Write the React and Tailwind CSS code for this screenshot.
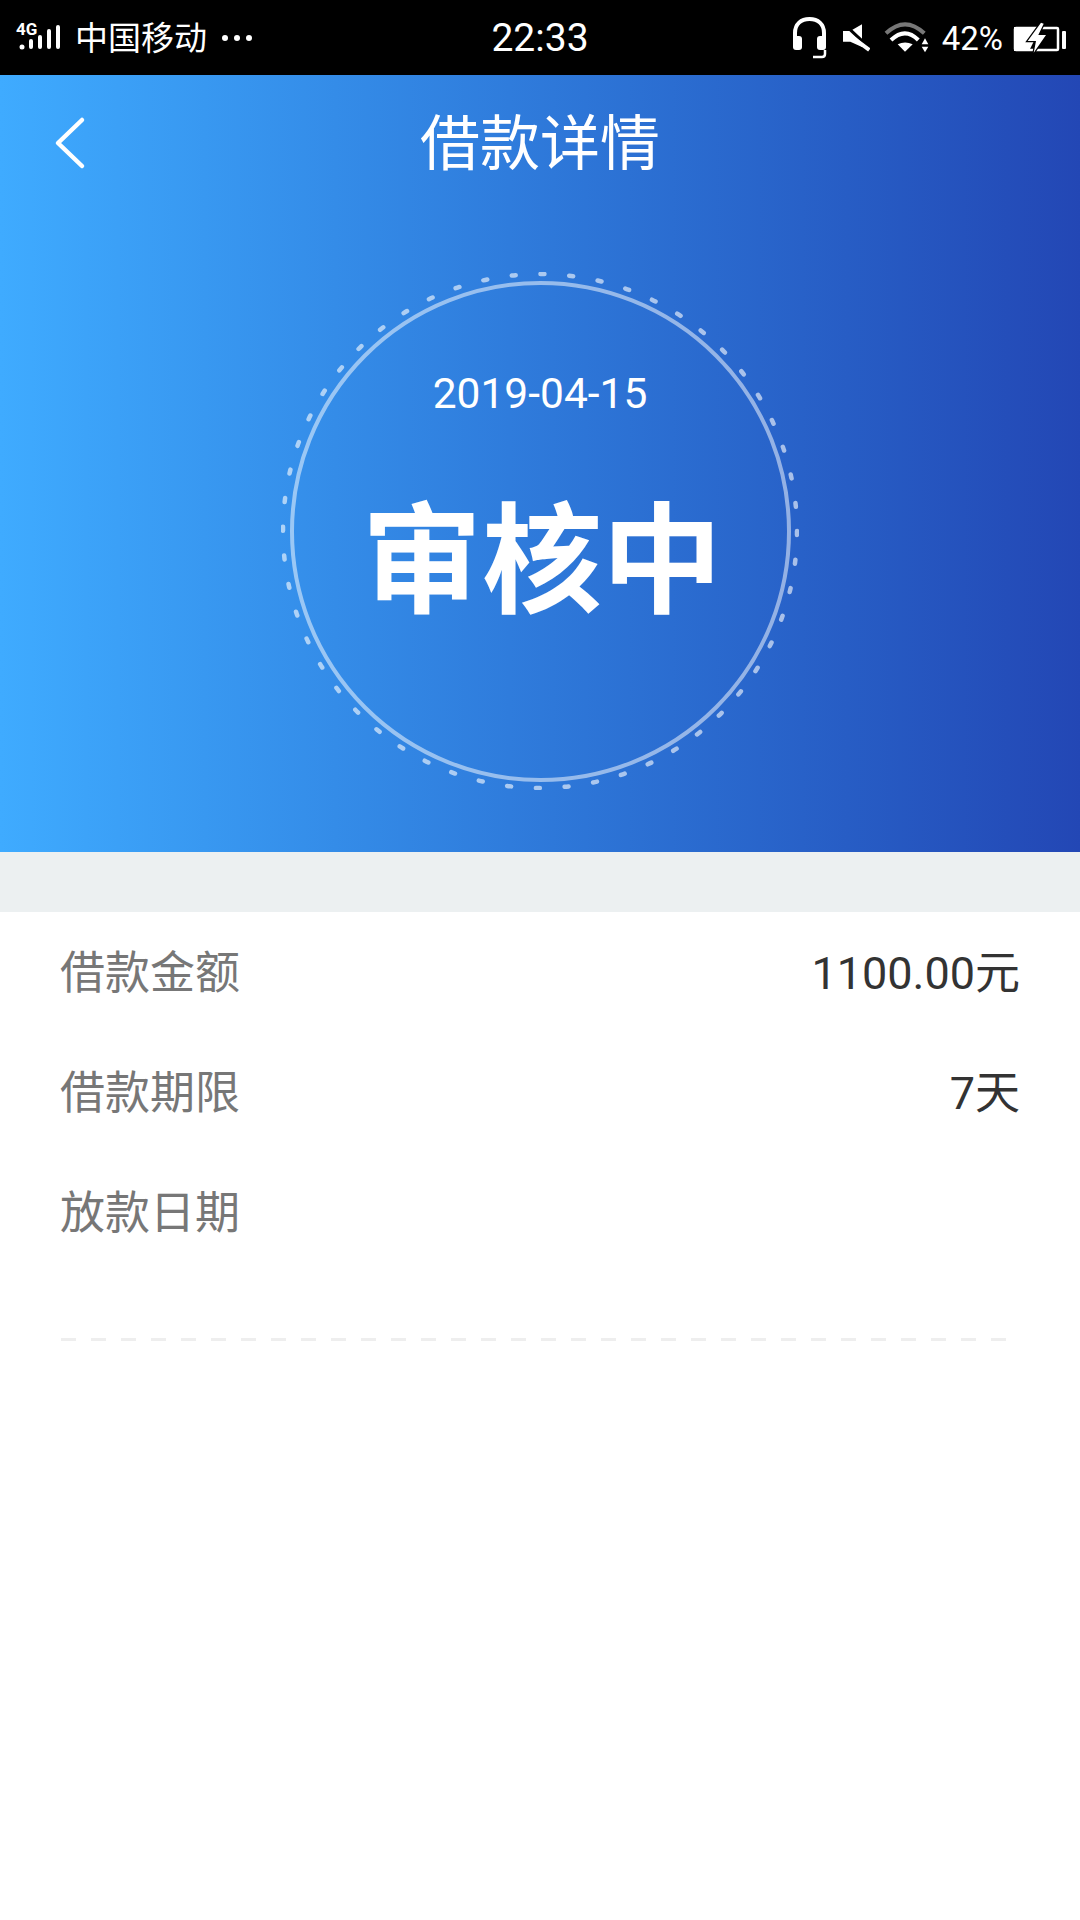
import React from "react";

const cjk = "font-['Roboto','Noto_Sans_CJK_SC',sans-serif]";

function Signal() {
  return (
    <div className="relative h-[48px] w-[46px]">
      <span className="absolute left-0 top-[5px] font-['Roboto',sans-serif] text-[17px] font-bold leading-[20px] text-white">4G</span>
      <svg className="absolute left-0 top-0" width="46" height="48" viewBox="0 0 46 48" fill="#fff">
        <circle cx="6" cy="33" r="2.500" />
        <rect x="13" y="25" width="4" height="10" rx="2" />
        <rect x="22" y="21" width="4" height="14" rx="2" />
        <rect x="31" y="15" width="4" height="20" rx="2" />
        <rect x="40" y="11" width="4" height="24" rx="2" />
      </svg>
    </div>
  );
}

function Headphones() {
  return (
    <svg width="36" height="42" viewBox="0 0 36 42" fill="none">
      <path d="M3 24V16C3 7 9 2 17.500 2S32 7 32 16V24" stroke="#fff" strokeWidth="4" />
      <rect x="1" y="19" width="9" height="14" rx="3" fill="#fff" />
      <rect x="25" y="19" width="9" height="14" rx="3" fill="#fff" />
      <path d="M33 33V37C33 39 32 40 30 40H21" stroke="#fff" strokeWidth="2.500" />
    </svg>
  );
}

function Mute() {
  return (
    <svg width="28" height="30" viewBox="0 0 28 30" fill="none">
      <path d="M1 8H8.300L20 1.300V24L8.300 18.700H1Z" fill="#fff" />
      <path d="M6.700 5.300L21.700 19.300" stroke="#000" strokeWidth="3" />
      <path d="M5 10.300L27.300 27" stroke="#fff" strokeWidth="4" />
    </svg>
  );
}

function Wifi() {
  return (
    <svg width="46" height="34" viewBox="0 0 46 34" fill="none">
      <path d="M2 12.300Q21 -5.700 40.300 12.300" stroke="#777" strokeWidth="4" />
      <path d="M7 19Q21 5.600 34.300 19" stroke="#fff" strokeWidth="4" />
      <path d="M13.700 23.300Q21 19.500 28.700 23.300L21 30.700Z" fill="#fff" />
      <path d="M41 17.300L44.300 23.300H37.700Z" fill="#fff" />
      <path d="M37.700 25.700H44.300L41 31.300Z" fill="#fff" />
    </svg>
  );
}

function Battery() {
  return (
    <svg width="54" height="34" viewBox="0 0 54 34" fill="none">
      <rect x="2" y="7" width="43" height="22" rx="1" stroke="#fff" strokeWidth="2.500" />
      <path d="M1 6H28L16 30H1Z" fill="#fff" />
      <path d="M28 1.700L14.700 20H23L20.700 31.700L33 14H25.300L30.700 2.700Z" fill="#fff" stroke="#000" strokeWidth="2.500" strokeLinejoin="miter" paintOrder="stroke" />
      <rect x="49" y="10" width="4" height="18" rx="1" fill="#fff" />
    </svg>
  );
}

function DashedRing() {
  const n = 56;
  const r = 257;
  return (
    <svg className="absolute inset-0" width="518" height="518" viewBox="0 0 518 518">
      <circle
        cx="259"
        cy="259"
        r={r}
        fill="none"
        stroke="#ffffff"
        strokeOpacity="0.6"
        strokeWidth="4.500"
        strokeLinecap="round"
        strokeDasharray={`4 ${(2 * Math.PI * r) / n - 4}`}
      />
    </svg>
  );
}

function Row({ label, value }) {
  return (
    <div className="flex h-[120px] items-center justify-between px-[60px] pt-[2px]">
      <span className="text-[45px] leading-none text-[#777777]">{label}</span>
      {value && <span className="text-[45px] leading-none text-[#333333]">{value}</span>}
    </div>
  );
}

export default function App() {
  return (
    <div className={`flex min-h-[1920px] w-[1080px] flex-col bg-white ${cjk}`}>
      <div className="flex h-[75px] items-center justify-between bg-black text-white">
        <div className="flex w-[360px] items-center pl-[16px]">
          <Signal />
          <span className="ml-[13px] pt-[1px] text-[33px] leading-none">中国移动</span>
          <div className="ml-[15px] flex gap-[6px]">
            <span className="h-[6px] w-[6px] rounded-full bg-white" />
            <span className="h-[6px] w-[6px] rounded-full bg-white" />
            <span className="h-[6px] w-[6px] rounded-full bg-white" />
          </div>
        </div>
        <span className="pt-[2px] text-[39px] leading-none">22:33</span>
        <div className="flex w-[360px] items-center justify-end pr-[13px]">
          <Headphones />
          <span className="ml-[14px]"><Mute /></span>
          <span className="ml-[14px]"><Wifi /></span>
          <span className="ml-[12px] pt-[1px] text-[33px] leading-none">42%</span>
          <span className="ml-[10px]"><Battery /></span>
        </div>
      </div>

      <div className="flex h-[777px] flex-col items-center bg-gradient-to-r from-[#3fabff] to-[#2347b5]">
        <div className="relative flex h-[136px] w-full items-center justify-center pt-[4px]">
          <svg className="absolute left-[54px] top-[41px]" width="32" height="54" viewBox="0 0 32 54" fill="none">
            <path d="M28 4L4 27L28 50" stroke="#fff" strokeWidth="4.500" strokeLinecap="round" strokeLinejoin="round" />
          </svg>
          <span className="text-[60px] leading-none text-white">借款详情</span>
        </div>
        <div className="relative mt-[61px] flex h-[518px] w-[518px] items-center justify-center">
          <DashedRing />
          <div className="flex h-[501px] w-[501px] flex-col items-center rounded-full border-[4px] border-white/50 pt-[88px]">
            <span className="text-[42.500px] leading-none text-white">2019-04-15</span>
            <span className="ml-[4px] mt-[88px] text-[120px] font-bold leading-none text-white">审核中</span>
          </div>
        </div>
      </div>

      <div className="h-[60px] bg-[#ecf0f1]" />

      <Row label="借款金额" value="1100.00元" />
      <Row label="借款期限" value="7天" />
      <Row label="放款日期" />

      <div className="ml-[61px] mt-[66px] h-[3px] w-[947px] bg-[repeating-linear-gradient(90deg,#eeeeee_0,#eeeeee_15px,transparent_15px,transparent_30px)]" />
    </div>
  );
}
